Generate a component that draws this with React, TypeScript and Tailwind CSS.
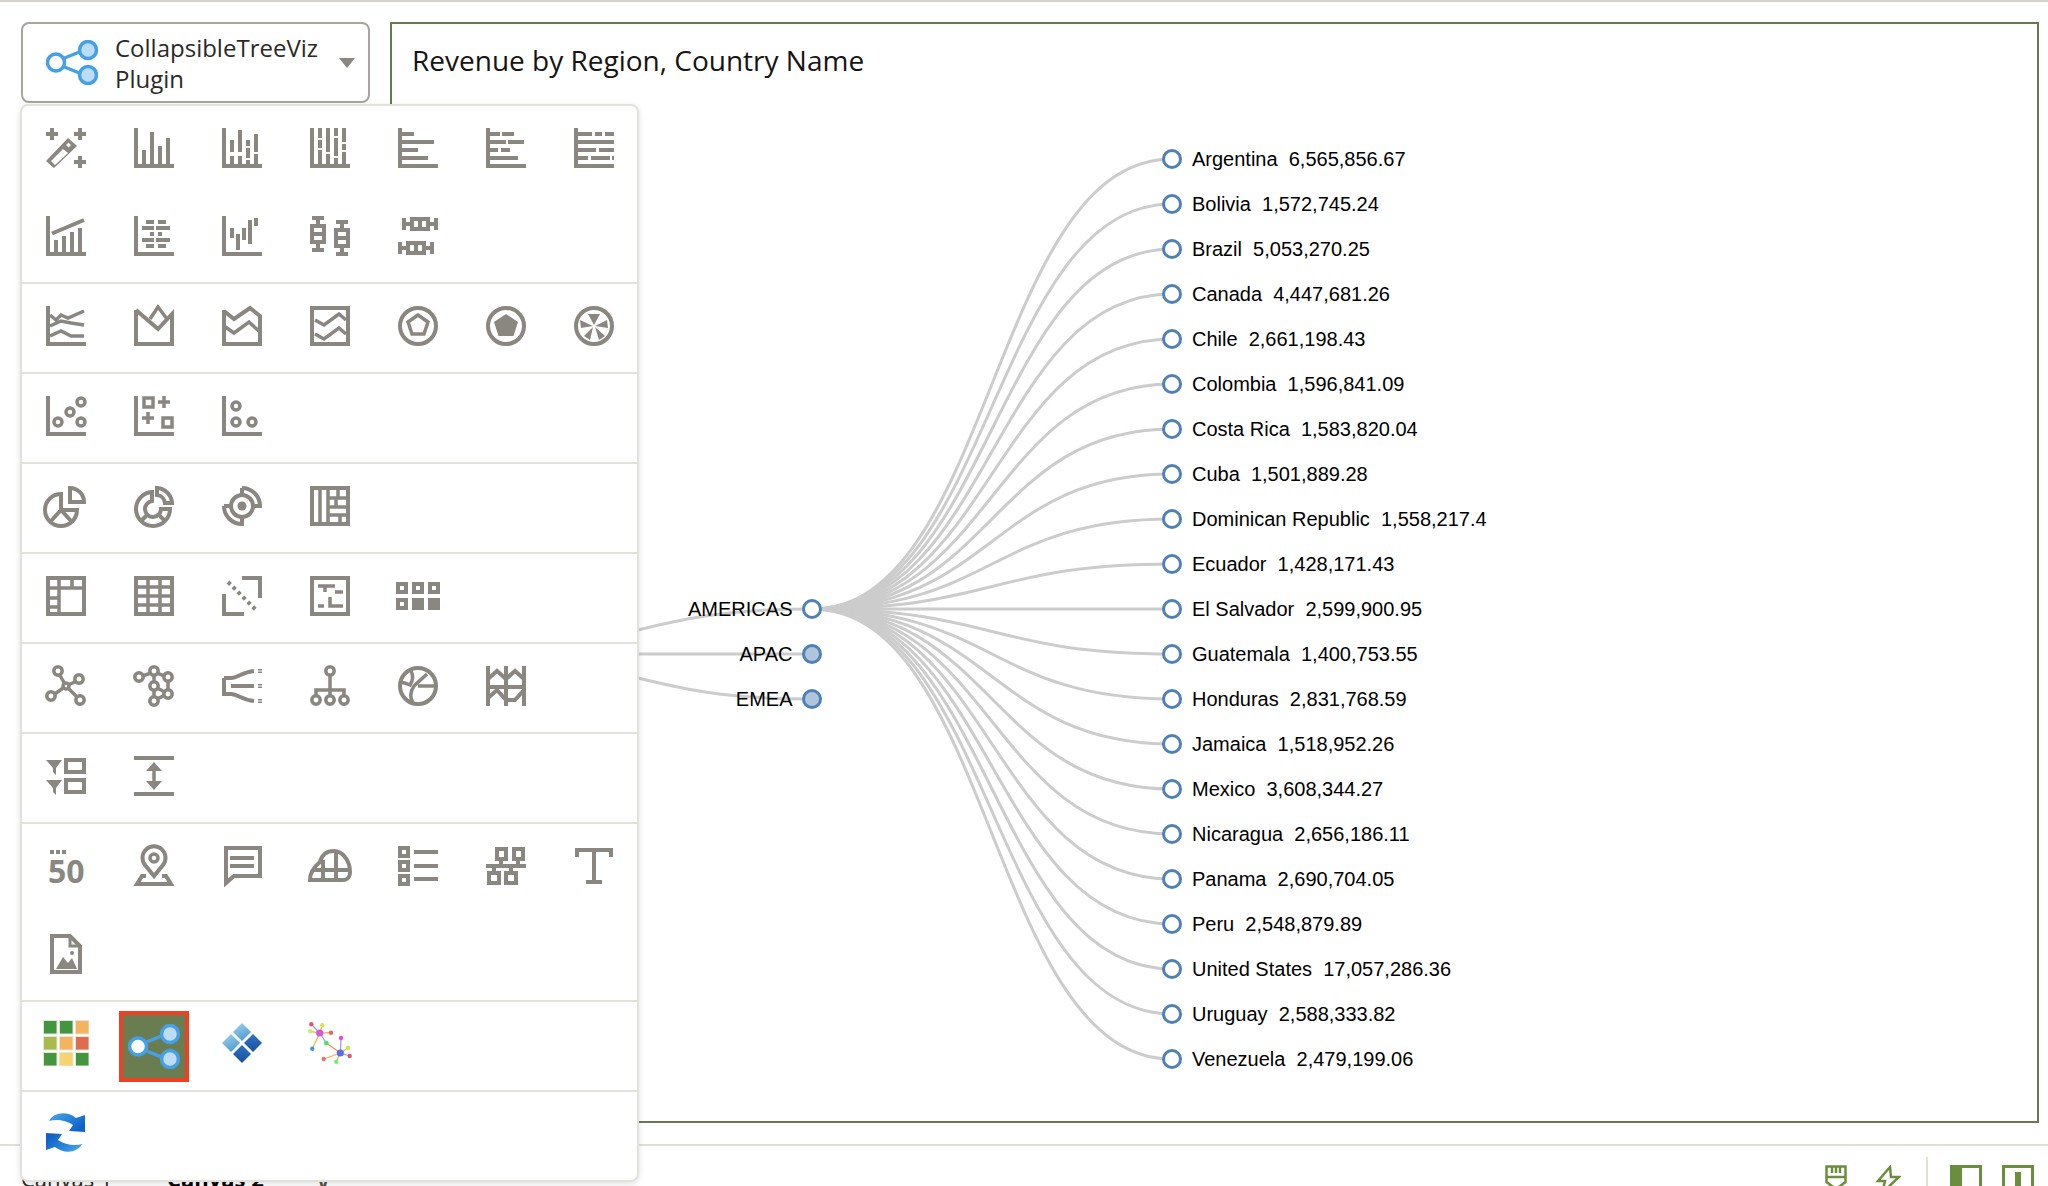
import type { ReactNode } from 'react';

const COUNTRIES: [string, string][] = [
  ['Argentina', '6,565,856.67'],
  ['Bolivia', '1,572,745.24'],
  ['Brazil', '5,053,270.25'],
  ['Canada', '4,447,681.26'],
  ['Chile', '2,661,198.43'],
  ['Colombia', '1,596,841.09'],
  ['Costa Rica', '1,583,820.04'],
  ['Cuba', '1,501,889.28'],
  ['Dominican Republic', '1,558,217.4'],
  ['Ecuador', '1,428,171.43'],
  ['El Salvador', '2,599,900.95'],
  ['Guatemala', '1,400,753.55'],
  ['Honduras', '2,831,768.59'],
  ['Jamaica', '1,518,952.26'],
  ['Mexico', '3,608,344.27'],
  ['Nicaragua', '2,656,186.11'],
  ['Panama', '2,690,704.05'],
  ['Peru', '2,548,879.89'],
  ['United States', '17,057,286.36'],
  ['Uruguay', '2,588,333.82'],
  ['Venezuela', '2,479,199.06'],
];

const REGIONS = [
  { name: 'AMERICAS', y: 609, open: true },
  { name: 'APAC', y: 654, open: false },
  { name: 'EMEA', y: 699, open: false },
];

function link(x0: number, y0: number, x1: number, y1: number) {
  const m = (x0 + x1) / 2;
  return `M${x0},${y0}C${m},${y0} ${m},${y1} ${x1},${y1}`;
}

const AXIS = <path d="M2 0V38H40" strokeWidth={4} />;

function P({ d, w = 4 }: { d: string; w?: number }) {
  return <path d={d} strokeWidth={w} />;
}

function Ico({ children }: { children: ReactNode }) {
  return (
    <svg
      viewBox="0 0 40 40"
      className="block h-10 w-10 overflow-visible text-[#8a8680]"
      fill="none"
      stroke="currentColor"
      strokeWidth={3.5}
    >
      {children}
    </svg>
  );
}

const F = { fill: 'currentColor', stroke: 'none' };

const SECTIONS: ReactNode[][] = [
  [
    <>
      <P d="M0 6H12M6 0V12M28 6H40M34 0V12M28 34H40M34 28V40" />
      <path {...F} fillRule="evenodd" d="M0 33L22 10L31 18L8 40ZM5 33L9 37L22 25L17 21ZM20 17L22.5 19.5L25 17L22.5 14.5Z" />
    </>,
    <>{AXIS}<P d="M10 22V36M18 4V36M26 18V36M34 10V36" /></>,
    <>{AXIS}<P d="M10 12V24M10 28V36M18 2V24M18 28V36M26 12V18M26 20V30M26 32V36M34 6V24M34 26V36" /></>,
    <>{AXIS}<P d="M10 0V10M10 12V20M10 22V36M18 0V24M18 26V36M26 0V8M26 10V28M26 30V36M34 0V14M34 16V22M34 24V36" /></>,
    <>{AXIS}<P d="M4 6H16M4 14H36M4 22H20M4 30H30" /></>,
    <>{AXIS}<P d="M4 6H14M16 6H28M4 14H20M22 14H38M4 22H12M15 22H24M4 30H32" /></>,
    <>{AXIS}<P d="M4 6H18M21 6H28M31 6H40M4 14H40M4 22H22M25 22H40M4 30H14M17 30H36M38 30H40" /></>,
    <>{AXIS}<P d="M10 24V36M18 20V36M26 16V36M34 12V36M6 17.5L38 4" /></>,
    <>{AXIS}<P d="M12 6H20M24 6H32M8 12H20M22 12H36M16 18H20M24 18H28M8 24H20M22 24H36M12 30H20M24 30H32" /></>,
    <>{AXIS}<P d="M10 12V22M16 18V34M22 12V24M28 4V28M34 2V10" /></>,
    <>
      <P d="M2 2H14M8 2V8M8 28V34M2 34H14M2 18H14" />
      <rect x={2} y={10} width={12} height={16} strokeWidth={4} />
      <g transform="translate(24 4)">
        <P d="M2 2H14M8 2V8M8 28V34M2 34H14M2 18H14" />
        <rect x={2} y={10} width={12} height={16} strokeWidth={4} />
      </g>
    </>,
    <>
      <g transform="translate(4 0)">
        <P d="M2 2V14M2 8H8M28 8H34M34 2V14M18 4V12" />
        <rect x={10} y={3} width={16} height={10} strokeWidth={4} />
      </g>
      <g transform="translate(0 24)">
        <P d="M2 2V14M2 8H8M28 8H34M34 2V14M18 4V12" />
        <rect x={10} y={3} width={16} height={10} strokeWidth={4} />
      </g>
    </>,
  ],
  [
    <>{AXIS}<P w={3.5} d="M4 9L10 14L15 9L22 12L38 5M4 20L15 15L25 17L38 19M4 30L15 25L25 30L38 30" /></>,
    <><P d="M2 4V38H38V8L24 23L2 4" /><P w={3.5} d="M16 13L24 1L33 13" /></>,
    <><P d="M2 4V38H38V10L28 2L12 13L2 5" /><P w={3.5} d="M2 20L12 27L27 16L38 26" /></>,
    <>
      <rect x={2} y={2} width={36} height={36} strokeWidth={4} />
      <P w={3.5} d="M5 14L14 19L29 8L36 14M5 28L14 33L29 22L36 28" />
    </>,
    <><circle cx={20} cy={20} r={18} strokeWidth={4} /><path d="M20 9L30 16L26 28H14L10 16Z" /></>,
    <><circle cx={20} cy={20} r={18} strokeWidth={4} /><path {...F} d="M20 8L32 16L27.5 30H12.5L8 16Z" /></>,
    <>
      <circle cx={20} cy={20} r={18} strokeWidth={4} />
      <path {...F} d="M14 8H26L20 19ZM33 14L34 22L21 20ZM31 30L25 34L21 21ZM10 30L16 34L19 21ZM6 14L7 22L19 20Z" />
    </>,
  ],
  [
    <>{AXIS}{[[12, 26], [24, 16], [35, 6], [35, 26]].map(([x, y]) => <circle key={x * y} cx={x} cy={y} r={4} />)}</>,
    <>
      {AXIS}
      <rect x={10} y={2} width={9} height={9} />
      <rect x={29} y={22} width={9} height={9} />
      <P d="M24 6H36M30 0V12M8 22H20M14 16V28" w={3.5} />
    </>,
    <>{AXIS}<circle cx={14} cy={10} r={4} /><circle cx={14} cy={26} r={4} /><circle cx={30} cy={26} r={4} /></>,
  ],
  [
    <>
      <P d="M15 8A16 16 0 1 0 31 24H15ZM15 24L5 35M15 24L26 36" />
      <P d="M24 2A14 14 0 0 1 38 16H24Z" />
    </>,
    <>
      <P d="M18 6A17 17 0 1 0 36 23H27A8 8 0 1 1 18 15ZM8 34L13 29M26 30L31 35" />
      <P d="M23 2A16 16 0 0 1 38 17H31A9 9 0 0 0 23 9Z" />
    </>,
    <>
      <circle cx={20} cy={20} r={11} strokeWidth={4} />
      <circle cx={20} cy={20} r={4.5} {...F} />
      <P d="M20 2A18 18 0 0 1 38 20H31M20 2V9M2 20A18 18 0 0 0 20 38V31M2 20H9" />
    </>,
    <>
      <rect x={2} y={2} width={36} height={36} strokeWidth={4} />
      <P w={3.5} d="M10 2V38M18 2V38M18 12H38M18 21H38M18 29H38M28 2V12M30 29V38M26 12V21" />
    </>,
  ],
  [
    <>
      <rect x={2} y={2} width={36} height={36} strokeWidth={4} />
      <P w={3.5} d="M2 12H38M13 2V38M26 2V12M2 22H13M2 31H13" />
    </>,
    <>
      <rect x={2} y={2} width={36} height={36} strokeWidth={4} />
      <P w={3.5} d="M14 2V38M26 2V38M2 11H38M2 20H38M2 29H38" />
    </>,
    <>
      <P d="M20 2H38V22M2 18V38H22" />
      <path d="M6 6L34 34" strokeWidth={4} strokeDasharray="3.5 3.5" />
    </>,
    <>
      <rect x={2} y={2} width={36} height={36} strokeWidth={4} />
      <P w={3.5} d="M8 10H25M15 10V16M25 16H33M8 30H14M20 21V30H33" />
    </>,
    <>
      {[-2, 14, 30].map((x) => (
        <rect key={x} x={x + 2} y={8} width={8} height={8} strokeWidth={4} />
      ))}
      <rect x={0} y={24} width={8} height={8} strokeWidth={4} />
      <path {...F} d="M14 22H26V34H14ZM30 22H42V34H30Z" />
    </>,
  ],
  [
    <>
      <P w={3.5} d="M20 20L12 6M20 20L33 14M20 20L6 30M20 20L34 34" />
      {[[12, 5], [33, 13], [5, 30], [34, 34]].map(([x, y]) => (
        <circle key={x} cx={x} cy={y} r={4.2} fill="#fff" />
      ))}
      <circle cx={20} cy={20} r={3} fill="#fff" />
    </>,
    <>
      <P w={3.5} d="M5 11L20 6L34 11V28L20 34L20 20L20 6M34 28L20 20" />
      {[[5, 11], [20, 5], [34, 11], [20, 20], [34, 28], [20, 35]].map(([x, y]) => (
        <circle key={x * y} cx={x} cy={y} r={4.2} fill="#fff" />
      ))}
    </>,
    <>
      <P d="M2 12V28H9C16 28 20 34 32 35M2 12H9C16 12 20 6 32 5M9 20H32" />
      <path d="M38 3V7M38 18V22M38 33V37" strokeWidth={4} strokeDasharray="1.5 1" />
    </>,
    <>
      <P w={3.5} d="M20 10V24M6 30V24H34V30M20 24V30" />
      {[[20, 5], [6, 34], [20, 34], [34, 34]].map(([x, y]) => (
        <circle key={x * y} cx={x} cy={y} r={4.2} fill="#fff" />
      ))}
    </>,
    <>
      <circle cx={20} cy={20} r={18} strokeWidth={4} />
      <P w={3.5} d="M20 20H38M29 8L16 20C12 26 12 32 15 37M2 16C8 17 10 18 12 19C15 14 16 10 12 3" />
    </>,
    <>
      <P d="M2 0V40M20 0V40M38 0V40M2 21H38" />
      <P d="M2 13L11 5L20 13L29 5L38 13M2 32L11 24L20 34L29 34L38 24" />
    </>,
  ],
  [
    <>
      <path {...F} d="M0 4H16L10 12V19L7 16V12ZM0 24H16L10 32V39L7 36V32Z" />
      <rect x={20} y={4} width={18} height={12} strokeWidth={4} />
      <rect x={20} y={24} width={18} height={12} strokeWidth={4} />
    </>,
    <>
      <P d="M0 2H40M0 38H40" />
      <P w={3.5} d="M20 8V32" />
      <path {...F} d="M20 6L28 15H12ZM20 34L28 25H12Z" />
    </>,
  ],
  [
    <>
      <path d="M4 6H20" strokeWidth={4} strokeDasharray="4 2" />
      <text x={2} y={37} fontSize={32} fontWeight={700} fontFamily="'Open Sans', sans-serif" {...F}>
        50
      </text>
    </>,
    <>
      <P w={4} d="M20 30L11 19A11.5 11.5 0 1 1 29 19Z" />
      <circle cx={20} cy={12} r={4} />
      <P w={4} d="M12 30H8L3 38H37L32 30H28" />
    </>,
    <>
      <P d="M2 2H38V30H12L4 37V2" />
      <P d="M8 12H32M8 20H32" />
    </>,
    <>
      <P d="M0 34C0 26 5 20 10 16C12 8 18 5 24 5C32 5 40 14 40 26C40 32 36 34 33 34Z" />
      <P d="M3 24H40M13 14V34M26 5V34" />
    </>,
    <>
      <rect x={2} y={2} width={8} height={8} strokeWidth={4} />
      <rect x={2} y={16} width={8} height={8} strokeWidth={4} />
      <rect x={2} y={30} width={8} height={8} strokeWidth={4} />
      <P d="M16 6H40M16 20H40M16 33H40" />
    </>,
    <>
      <rect x={11} y={3} width={9} height={10} strokeWidth={4} />
      <rect x={28} y={3} width={9} height={10} strokeWidth={4} />
      <rect x={3} y={27} width={10} height={10} strokeWidth={4} />
      <rect x={20} y={27} width={10} height={10} strokeWidth={4} />
      <P d="M0 20H40M15 13V20M32 13V20M8 20V27M25 20V27" />
    </>,
    <><P d="M3 11V4H37V11M20 4V36M12 36H28" /></>,
    <>
      <P d="M6 2H24L34 12V38H6Z" />
      <P w={3} d="M24 2V12H34" />
      <path {...F} d="M10 35L17 23L22 29L26 24L31 35Z" />
      <circle {...F} cx={26} cy={19} r={2} />
    </>,
  ],
];

function ShareIcon() {
  return (
    <svg viewBox="0 0 52 45" className="block h-[45px] w-[52px] blur-[0.6px]" fill="none" stroke="#45a0e6">
      <path d="M16 19L36 11M16 26L36 34" strokeWidth={3.5} />
      <circle cx={10} cy={22.5} r={8.5} strokeWidth={3.5} fill="#fff" />
      <circle cx={42} cy={10} r={8.5} strokeWidth={3.5} fill="#bcdcf3" />
      <circle cx={42} cy={35} r={8.5} strokeWidth={3.5} fill="#bcdcf3" />
    </svg>
  );
}

const HEAT = ['#43963f', '#43963f', '#f5b35f', '#a9bb4f', '#f5b35f', '#e06c50', '#43963f', '#f5d36f', '#43963f'];

function HeatIcon() {
  return (
    <svg viewBox="0 0 46 46" className="block h-[46px] w-[46px]">
      {HEAT.map((c, i) => (
        <rect key={i} x={(i % 3) * 16 + 0.5} y={Math.floor(i / 3) * 16 + 0.5} width={13.5} height={13.5} fill={c} stroke="#dfe8d8" strokeWidth={1} />
      ))}
    </svg>
  );
}

function DiamondIcon() {
  return (
    <svg viewBox="0 0 42 42" className="block h-[42px] w-[42px] blur-[0.7px]">
      <defs>
        <linearGradient id="dia-light" x1="0" y1="0" x2="0.5" y2="1">
          <stop offset="0" stopColor="#a8d4ea" />
          <stop offset="1" stopColor="#4d9fd6" />
        </linearGradient>
        <linearGradient id="dia-dark" x1="0.5" y1="0" x2="0.5" y2="1">
          <stop offset="0" stopColor="#2a74c0" />
          <stop offset="1" stopColor="#1c4ea4" />
        </linearGradient>
      </defs>
      <path d="M21 1L30 10L21 19L12 10Z" fill="url(#dia-light)" />
      <path d="M10 12L19 21L10 30L1 21Z" fill="url(#dia-light)" />
      <path d="M32 12L41 21L32 30L23 21Z" fill="url(#dia-dark)" />
      <path d="M21 23L30 32L21 41L12 32Z" fill="url(#dia-dark)" />
    </svg>
  );
}

function NetworkIcon() {
  const a: [number, number, string, string][] = [
    [3.3, 2.3, '#e05a6a', '#9a9cf0'],
    [14.3, 3.3, '#cfe850', '#f5b050'],
    [2.3, 9.3, '#c8f060', '#f5b050'],
    [23, 10.7, '#e8626a', '#f5b050'],
    [4.3, 26.7, '#3a9be0', '#f5b050'],
    [18.3, 21, '#50e070', '#9a9cf0'],
  ];
  const b: [number, number, string, string][] = [
    [33, 16, '#e050d0', '#9a9cf0'],
    [40, 25.7, '#c8e850', '#f5b050'],
    [41.7, 34, '#e05a6a', '#9a9cf0'],
    [28.3, 39.7, '#70f070', '#f5b050'],
    [15.7, 37, '#e8707a', '#f5b050'],
    [18.3, 21, '#50e070', '#f59050'],
  ];
  return (
    <svg viewBox="0 0 45 43" className="block h-[43px] w-[45px]">
      {a.map(([x, y, , l]) => <line key={x} x1={11.7} y1={11} x2={x} y2={y} stroke={l} strokeWidth={1.3} />)}
      {b.map(([x, y, , l]) => <line key={x} x1={32.3} y1={31} x2={x} y2={y} stroke={l} strokeWidth={1.3} />)}
      {[...a, ...b].map(([x, y, c], i) => <circle key={i} cx={x} cy={y} r={2.2} fill={c} />)}
      <circle cx={11.7} cy={11} r={3.6} fill="#d05ad8" />
      <circle cx={32.3} cy={31} r={3.6} fill="#5a6ee8" />
    </svg>
  );
}

function RefreshIcon() {
  const arrow = 'M3 9C7 1 20 -2 30 6L39 3V20L23 19L27 13C20 8 10 7 3 9Z';
  return (
    <svg viewBox="0 0 40 41" className="block h-[41px] w-10 blur-[0.6px]">
      <defs>
        <linearGradient id="refresh-top" x1="0" y1="0" x2="1" y2="0.6">
          <stop offset="0" stopColor="#4aa8ea" />
          <stop offset="1" stopColor="#0f62c8" />
        </linearGradient>
      </defs>
      <path d={arrow} fill="url(#refresh-top)" />
      <path d={arrow} fill="url(#refresh-top)" transform="rotate(180 19.5 20.5)" />
    </svg>
  );
}

export default function App() {
  const root = { x: 452, y: 654 };
  const americas = { x: 812, y: 609 };

  return (
    <div className="relative flex h-[1186px] w-[2048px] flex-col overflow-hidden bg-white font-['Open_Sans',sans-serif] text-[#2b2926]">
      <div className="h-[2px] bg-[#d6d3cc]" />

      <div className="flex h-[1121px] gap-5 pl-[21px] pr-[9px] pt-5">
        <button className="flex h-[81px] w-[349px] flex-none items-center rounded-lg border-2 border-[#a8a5a0] bg-white pl-[23px] pr-[13px] text-left">
          <ShareIcon />
          <span className="ml-[17px] w-[220px] text-[24px] leading-[31px]">CollapsibleTreeViz Plugin</span>
          <span className="ml-auto h-0 w-0 border-x-[8px] border-t-[10px] border-x-transparent border-t-[#8a8680]" />
        </button>

        <div className="flex min-w-0 flex-1 flex-col border-2 border-[#667a4e]">
          <h1 className="flex h-[72px] flex-none items-center pl-5 text-[28px] font-normal text-[#161513]">
            Revenue by Region, Country Name
          </h1>
          <svg className="block min-h-0 flex-1" fill="none">
            <g transform="translate(-392 -96)">
              {REGIONS.map((r) => (
                <path key={r.name} d={link(root.x, root.y, 812, r.y)} stroke="#ccc" strokeWidth={3} />
              ))}
              {COUNTRIES.map(([name], i) => (
                <path key={name} d={link(americas.x, americas.y, 1172, 159 + i * 45)} stroke="#ccc" strokeWidth={3} />
              ))}
              {REGIONS.map((r) => (
                <g key={r.name}>
                  <circle cx={812} cy={r.y} r={8.5} fill={r.open ? '#fff' : '#b0c4de'} stroke="#4f81b5" strokeWidth={3} />
                  <text x={792.5} y={r.y + 7} textAnchor="end" fill="#000" fontSize={20} fontFamily="'Liberation Sans', sans-serif">
                    {r.name}
                  </text>
                </g>
              ))}
              {COUNTRIES.map(([name, value], i) => (
                <g key={name}>
                  <circle cx={1172} cy={159 + i * 45} r={8.5} fill="#fff" stroke="#4f81b5" strokeWidth={3} />
                  <text x={1192} y={166 + i * 45} className="whitespace-pre" fill="#000" fontSize={20} fontFamily="'Liberation Sans', sans-serif">
                    {`${name}  ${value}`}
                  </text>
                </g>
              ))}
            </g>
          </svg>
        </div>
      </div>

      <div className="mt-[21px] flex h-[42px] flex-none items-start border-t-2 border-[#e0e0da]">
        <div className="flex items-center pl-[21px] pt-[18px] text-[22px] leading-7">
          <span className="w-[146px]">Canvas 1</span>
          <span className="w-[146px] font-bold text-black">Canvas 2</span>
          <span className="text-[28px] text-[#55534f]">∨</span>
        </div>
        <div className="ml-auto flex items-start pr-[14px] pt-[19px]">
          <svg viewBox="0 0 22 30" className="mr-[28px] h-[30px] w-[22px]" fill="none" stroke="#6b8e3d" strokeWidth={2.5}>
            <path d="M1.5 1.5H20.5V17L11 24L1.5 17ZM1.5 12H20.5M7 2V8M11 2V8M15 2V8" />
          </svg>
          <svg viewBox="0 0 26 30" className="h-[30px] w-[26px]" fill="none" stroke="#6b8e3d" strokeWidth={2.5}>
            <path d="M15 2L3 16H10L7 28L24 12H16Z" />
          </svg>
          <div className="ml-[25px] mr-[22px] -mt-2 h-10 w-[2px] bg-[#e0e0da]" />
          <div className="mr-5 h-10 w-8 border-[3px] border-l-[12px] border-[#6b8e3d]" />
          <div className="flex h-10 w-8 justify-center border-[3px] border-[#6b8e3d] pt-[4px]">
            <div className="h-full w-[6px] bg-[#6b8e3d]" />
          </div>
        </div>
      </div>

      <div className="absolute left-5 top-[104px] h-[1078px] w-[619px] rounded-lg border-2 border-[#e2e2dd] bg-white shadow-[0_2px_6px_rgba(0,0,0,0.12)]">
        {SECTIONS.map((icons, s) => (
          <div key={s} className="grid grid-cols-[repeat(7,88px)] border-b-2 border-[#e2e2dd] pl-6">
            {icons.map((icon, i) => (
              <div key={i} className="h-[88px] pt-[22px]">
                <Ico>{icon}</Ico>
              </div>
            ))}
          </div>
        ))}
        <div className="grid grid-cols-[repeat(7,88px)] border-b-2 border-[#e2e2dd]">
          <div className="flex h-[88px] items-center justify-center pb-[6px]"><HeatIcon /></div>
          <div className="flex h-[88px] items-center justify-center">
            <div className="flex h-[71px] w-[70px] items-center justify-center border-4 border-[#ef4023] bg-[#6a7d50]">
              <ShareIcon />
            </div>
          </div>
          <div className="flex h-[88px] items-center justify-center pb-[6px]"><DiamondIcon /></div>
          <div className="flex h-[88px] items-center justify-center pb-[5px]"><NetworkIcon /></div>
        </div>
        <div className="w-[88px] pl-6 pt-5"><RefreshIcon /></div>
      </div>
    </div>
  );
}
